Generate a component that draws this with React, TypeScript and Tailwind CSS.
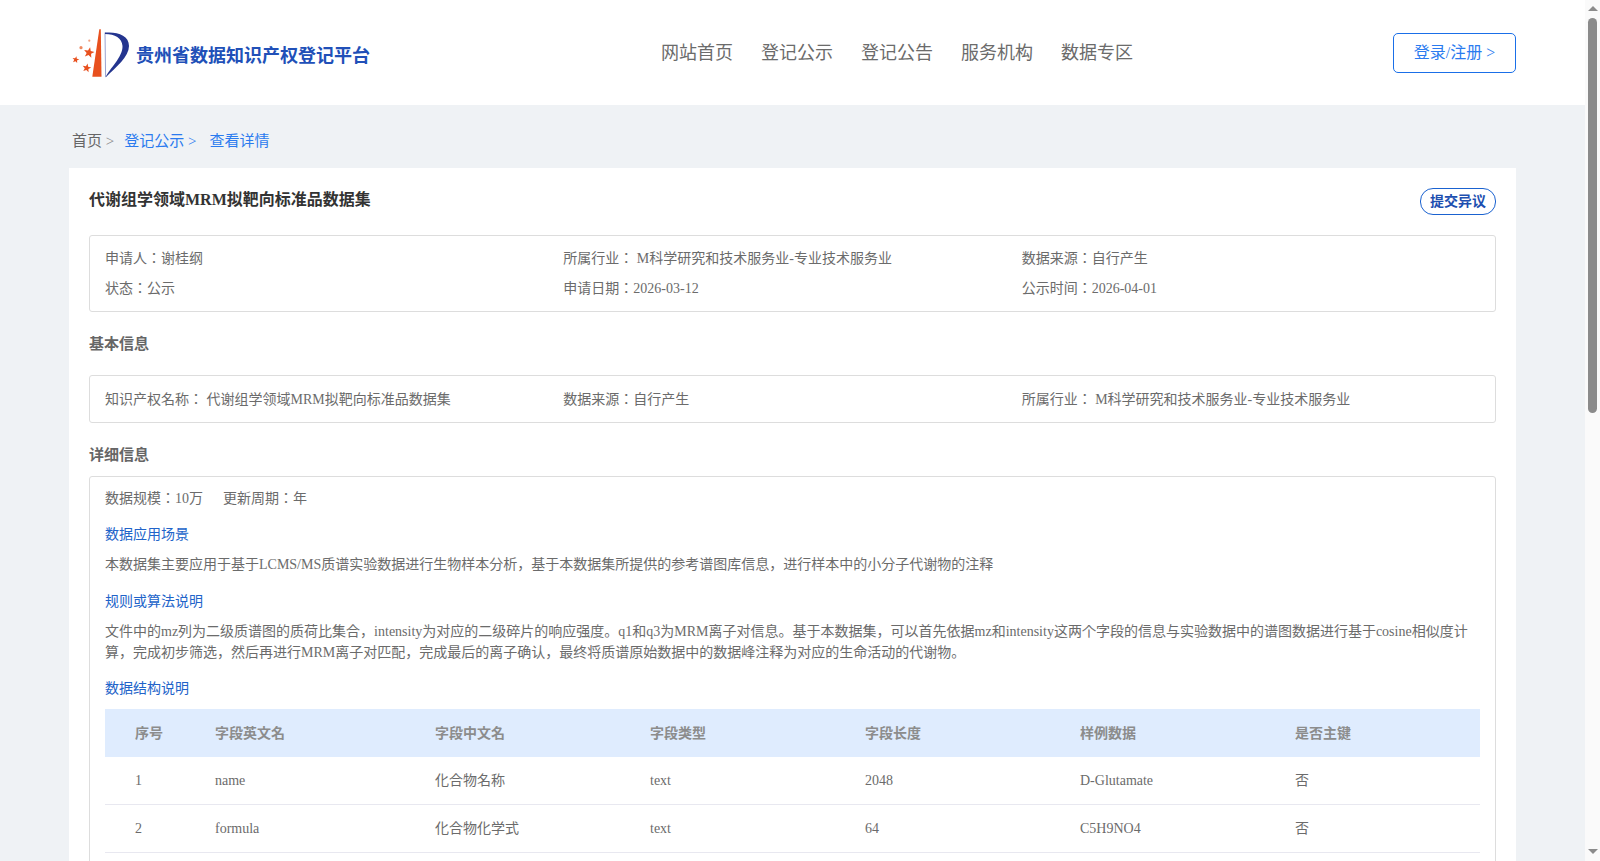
import React from 'react';

const serif = { fontFamily: '"Liberation Serif", "Noto Sans CJK JP", serif' };

const navItems = ['网站首页', '登记公示', '登记公告', '服务机构', '数据专区'];

const columns = ['序号', '字段英文名', '字段中文名', '字段类型', '字段长度', '样例数据', '是否主键'];

const rows = [
  ['1', 'name', '化合物名称', 'text', '2048', 'D-Glutamate', '否'],
  ['2', 'formula', '化合物化学式', 'text', '64', 'C5H9NO4', '否'],
  ['3', 'adduct', '加合离子类型', 'text', '64', '[M+H]+', '否'],
  ['4', 'mz', '二级质谱图质荷比', 'text', '4096', '84.04', '否'],
  ['5', 'intensity', '二级碎片响应强度', 'text', '4096', '100', '否'],
  ['6', 'q1', '母离子质荷比', 'float', '32', '148.06', '否'],
  ['7', 'q3', '子离子质荷比', 'float', '32', '84.04', '否'],
  ['8', 'ce', '碰撞能量', 'float', '32', '15', '否'],
];

function starPoints(cx: number, cy: number, r: number) {
  const pts: string[] = [];
  for (let i = 0; i < 10; i++) {
    const rad = i % 2 === 0 ? r : r * 0.42;
    const a = -Math.PI / 2 + (i * Math.PI) / 5 + 0.2;
    pts.push(`${(cx + rad * Math.cos(a)).toFixed(2)},${(cy + rad * Math.sin(a)).toFixed(2)}`);
  }
  return pts.join(' ');
}

function Logo() {
  return (
    <svg width="60" height="54" viewBox="0 0 60 54" className="mt-[3px] ml-[2px] shrink-0">
      <path d="M28.3 2.3 L29.8 2.3 L30.5 49.8 L21.3 49.8 Z" fill="#e8501e" />
      <path d="M34 5.6 L34.6 50" stroke="#8f98cc" strokeWidth="0.9" fill="none" />
      <path
        d="M34 5.6 C46 4.5 58 8 58 19 C58 30 45 40 34.6 50.4 C38 42 52 30 51.5 19 C51 11 44 7 34 7 Z"
        fill="#24358f"
      />
      <polygon points={starPoints(18, 25.7, 5.6)} fill="#e8501e" />
      <polygon points={starPoints(4.7, 32.7, 3.6)} fill="#e8501e" />
      <polygon points={starPoints(15.7, 41, 4.6)} fill="#e8501e" />
      <circle cx="10" cy="20.7" r="1.6" fill="#ee8a62" />
      <circle cx="18.3" cy="13.7" r="1.1" fill="#f0a080" />
    </svg>
  );
}

function Scrollbar() {
  return (
    <div className="fixed top-0 right-0 bottom-0 flex w-[15px] flex-col items-center bg-[#fafafa]">
      <div className="mt-[6px] h-0 w-0 border-x-[5px] border-b-[5px] border-x-transparent border-b-[#8b8b8b]" />
      <div className="mt-[7px] h-[395px] w-[9px] rounded-full bg-[#8b8b8b]" />
      <div className="mt-auto mb-[7px] h-0 w-0 border-x-[5px] border-t-[5px] border-x-transparent border-t-[#8b8b8b]" />
    </div>
  );
}

function Header() {
  return (
    <header className="h-[105px] bg-white">
      <div className="ml-[69px] flex h-full w-[1447px] items-center">
        <div className="flex w-[592px] items-center">
          <Logo />
          <span className="mt-[8px] ml-[5px] text-[18px] font-bold text-[#2150b8]">贵州省数据知识产权登记平台</span>
        </div>
        <nav className="mt-[2px] flex gap-[28px] text-[18px] text-[#6b6b6b]">
          {navItems.map((item) => (
            <a key={item} className="cursor-pointer">{item}</a>
          ))}
        </nav>
        <button className="ml-auto h-[40px] w-[123px] rounded-[5px] border border-[#1a6fe8] pt-[1px] text-[16px] text-[#2b7bef]">
          登录/注册 &gt;
        </button>
      </div>
    </header>
  );
}

function InfoBox({ children, className }: { children: React.ReactNode; className?: string }) {
  return (
    <div className={`rounded-[3px] border border-[#dddddd] px-[15px] text-[14px] text-[#6b6b6b] ${className ?? ''}`}>
      {children}
    </div>
  );
}

function SectionLabel({ children }: { children: React.ReactNode }) {
  return <div className="text-[14px] leading-[21px] text-[#2163c9]">{children}</div>;
}

export default function App() {
  return (
    <div className="min-h-screen bg-[#eff2f5]" style={serif}>
      <Header />

      {/* 面包屑 */}
      <div className="ml-[72px] flex h-[63px] items-center pt-[9px] text-[15px] text-[#666666]">
        <span>首页 <span className="text-[#888888]">&gt;</span></span>
        <span className="ml-[10px] text-[#2b7bef]">登记公示 &gt;</span>
        <span className="ml-[13px] text-[#2b7bef]">查看详情</span>
      </div>

      <main className="ml-[69px] w-[1447px] bg-white px-[20px] pb-[40px]">
        <div className="flex h-[67px] items-start justify-between pt-[20px]">
          <h1 className="text-[16px] leading-[24px] font-bold text-[#333333]">代谢组学领域MRM拟靶向标准品数据集</h1>
          <button className="h-[27px] w-[76px] rounded-[13px] border border-[#1a62d0] text-[14px] font-bold text-[#1d4fb0]">
            提交异议
          </button>
        </div>

        <InfoBox className="pt-[8px] pb-[7px]">
          <div className="grid grid-cols-3 leading-[30px]">
            <div>申请人：谢桂纲</div>
            <div>所属行业： M科学研究和技术服务业-专业技术服务业</div>
            <div>数据来源：自行产生</div>
            <div>状态：公示</div>
            <div>申请日期：2026-03-12</div>
            <div>公示时间：2026-04-01</div>
          </div>
        </InfoBox>

        <h2 className="flex h-[63px] items-center pt-[2px] text-[15px] font-bold text-[#666666]">基本信息</h2>

        <InfoBox className="pt-[9px] pb-[7px]">
          <div className="grid grid-cols-3 leading-[30px]">
            <div>知识产权名称： 代谢组学领域MRM拟靶向标准品数据集</div>
            <div>数据来源：自行产生</div>
            <div>所属行业： M科学研究和技术服务业-专业技术服务业</div>
          </div>
        </InfoBox>

        <h2 className="flex h-[53px] items-center pt-[11px] text-[15px] font-bold text-[#666666]">详细信息</h2>

        <InfoBox className="pt-[7px] pb-[30px]">
          <div className="flex gap-[20px] leading-[30px]">
            <span>数据规模：10万</span>
            <span>更新周期：年</span>
          </div>
          <div className="mt-[10px]"><SectionLabel>数据应用场景</SectionLabel></div>
          <p className="mt-[9px] leading-[21px]">
            本数据集主要应用于基于LCMS/MS质谱实验数据进行生物样本分析，基于本数据集所提供的参考谱图库信息，进行样本中的小分子代谢物的注释
          </p>
          <div className="mt-[16px]"><SectionLabel>规则或算法说明</SectionLabel></div>
          <p className="mt-[9px] leading-[21px]">
            文件中的mz列为二级质谱图的质荷比集合，intensity为对应的二级碎片的响应强度。q1和q3为MRM离子对信息。基于本数据集，可以首先依据mz和intensity这两个字段的信息与实验数据中的谱图数据进行基于cosine相似度计算，完成初步筛选，然后再进行MRM离子对匹配，完成最后的离子确认，最终将质谱原始数据中的数据峰注释为对应的生命活动的代谢物。
          </p>
          <div className="mt-[15px]"><SectionLabel>数据结构说明</SectionLabel></div>
          <table className="mt-[10px] w-full table-fixed border-separate border-spacing-0 text-left">
            <colgroup>
              <col className="w-[110px]" />
              <col className="w-[220px]" />
              <col className="w-[215px]" />
              <col className="w-[215px]" />
              <col className="w-[215px]" />
              <col className="w-[215px]" />
              <col />
            </colgroup>
            <thead>
              <tr className="h-[48px] bg-[#dfecfe] text-[#8c8c8c]">
                {columns.map((c, i) => (
                  <th key={c} className={i === 0 ? 'pl-[30px] font-bold' : 'font-bold'}>{c}</th>
                ))}
              </tr>
            </thead>
            <tbody>
              {rows.map((row) => (
                <tr key={row[0]} className="h-[48px]">
                  {row.map((cell, i) => (
                    <td key={i} className={i === 0 ? 'border-b border-[#e8e8f0] pl-[30px]' : 'border-b border-[#e8e8f0]'}>{cell}</td>
                  ))}
                </tr>
              ))}
            </tbody>
          </table>
        </InfoBox>
      </main>
      <div className="h-[250px]" />
      <Scrollbar />
    </div>
  );
}
